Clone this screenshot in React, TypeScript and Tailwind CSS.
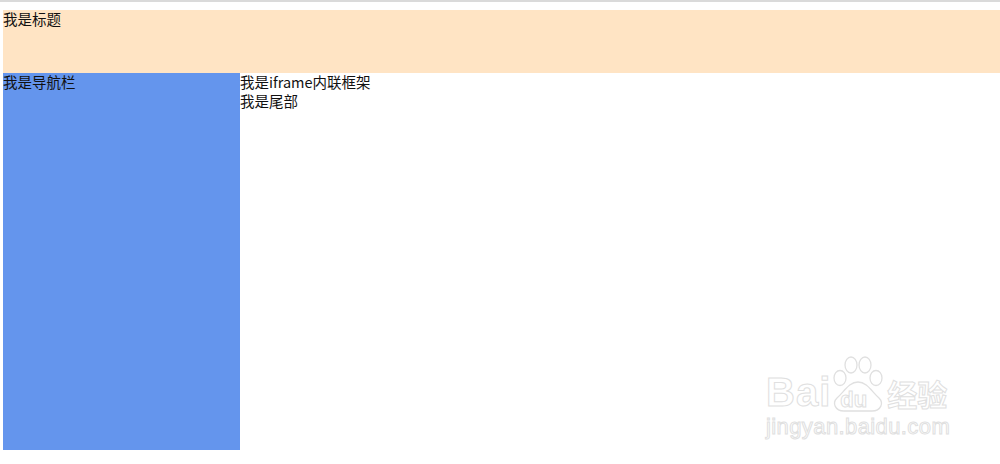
export default function App() {
  const font = { fontFamily: '"Noto Sans CJK SC", "Liberation Sans", sans-serif' }
  return (
    <div
      className="relative h-[464px] w-[1000px] overflow-hidden border-t-2 border-[#dadada] bg-white pl-[3px] pt-2 text-[14.5px] leading-[19px] text-[#111]"
      style={font}
    >
      <header className="flow-root h-[63px] bg-[#ffe4c4]">
        <div className="-mt-px">我是标题</div>
      </header>
      <div className="flex">
        <nav className="flow-root h-[377px] w-[237px] bg-[#6495ed]">
          <div className="-mt-px">我是导航栏</div>
        </nav>
        <div className="-mt-px flex flex-col">
          <span>我是iframe内联框架</span>
          <span>我是尾部</span>
        </div>
      </div>

      {/* watermark */}
      <div className="pointer-events-none absolute left-[766px] top-[354px] flex flex-col text-transparent [-webkit-text-stroke:1px_#e0e0e0]">
        <div className="flex items-end">
          <span className="text-[40px] font-bold leading-[40px] tracking-[1px]" style={{ fontFamily: '"Liberation Sans", sans-serif' }}>Bai</span>
          <div className="relative h-[56px] w-[54px]">
            <svg width="54" height="56" viewBox="0 0 54 56" className="absolute left-0 top-0">
              <g fill="white" stroke="#e0e0e0" strokeWidth="1.3">
                <ellipse cx="9" cy="22" rx="6" ry="7.5" />
                <ellipse cx="20" cy="9" rx="6" ry="8" />
                <ellipse cx="34" cy="9" rx="6" ry="8" />
                <ellipse cx="45" cy="22" rx="6" ry="7.5" />
                <path d="M27 26 C18 26 13 36 6 42 C1 47 4 55 13 55 L41 55 C50 55 53 47 48 42 C41 36 36 26 27 26 Z" />
              </g>
            </svg>
            <span className="absolute left-[9px] top-[33px] text-[22px] font-bold leading-[22px]" style={{ fontFamily: '"Liberation Sans", sans-serif' }}>du</span>
          </div>
          <span className="ml-[2px] text-[30px] font-bold leading-[38px]">经验</span>
        </div>
        <span className="mt-[4px] text-[22px] leading-[22px] tracking-[0.4px]" style={{ fontFamily: '"Liberation Sans", sans-serif' }}>jingyan.baidu.com</span>
      </div>
    </div>
  )
}
